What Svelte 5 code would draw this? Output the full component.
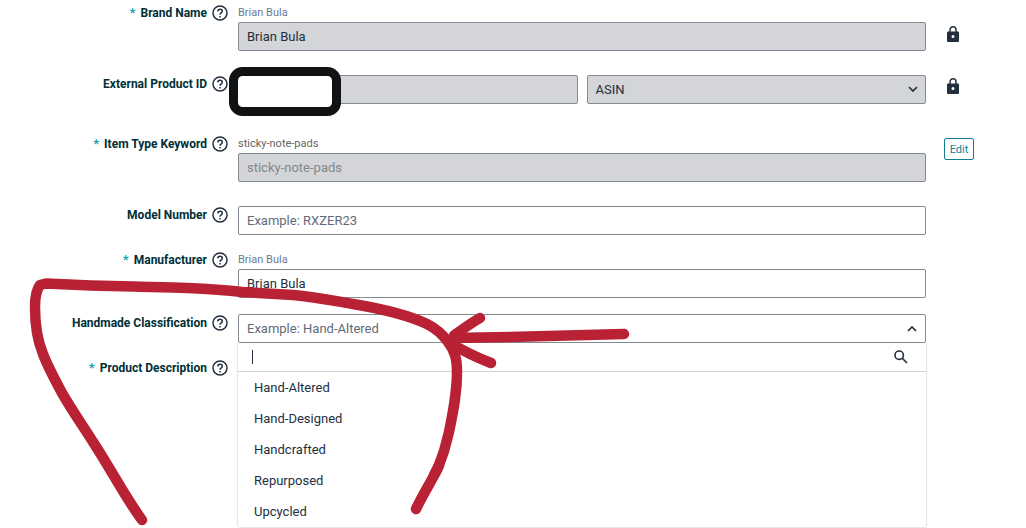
<script lang="ts">
    interface Field {
        id: string;
        label: string;
        required?: boolean;
        hint?: string;
        muted?: boolean;
        value?: string;
        placeholder?: string;
        disabled?: boolean;
        type: 'text' | 'external' | 'combo' | 'none';
        side?: 'lock' | 'edit';
        space?: 'md' | 'lg';
    }

    const fields: Field[] = [
        { id: 'brand', label: 'Brand Name', required: true, hint: 'Brian Bula', value: 'Brian Bula', disabled: true, type: 'text', side: 'lock', space: 'md' },
        { id: 'product-id', label: 'External Product ID', type: 'external', side: 'lock', space: 'lg' },
        { id: 'keyword', label: 'Item Type Keyword', required: true, hint: 'sticky-note-pads', muted: true, value: 'sticky-note-pads', disabled: true, type: 'text', side: 'edit', space: 'md' },
        { id: 'model', label: 'Model Number', placeholder: 'Example: RXZER23', type: 'text' },
        { id: 'manufacturer', label: 'Manufacturer', required: true, hint: 'Brian Bula', value: 'Brian Bula', type: 'text' },
        { id: 'classification', label: 'Handmade Classification', type: 'combo' },
        { id: 'description', label: 'Product Description', required: true, type: 'none' },
    ];

    const options = ['Hand-Altered', 'Hand-Designed', 'Handcrafted', 'Repurposed', 'Upcycled'];

    let open = $state(true);
    let search = $state('');
    let selected = $state('');

    let visible = $derived(options.filter(o => o.toLowerCase().includes(search.toLowerCase())));

    function choose(option: string) {
        selected = option;
        open = false;
    }
</script>

{#snippet chevron(up: boolean)}
    <svg class="chevron" viewBox="0 0 10 6" aria-hidden="true">
        <path d={up ? 'M1 5L5 1L9 5' : 'M1 1L5 5L9 1'} />
    </svg>
{/snippet}

<main>
    <form>
        {#each fields as field (field.id)}
            <div class="row {field.space ?? ''}">
                <div class="label">
                    {#if field.required}<span class="star">*</span>{/if}
                    {#if field.type === 'none'}
                        <span class="name">{field.label}</span>
                    {:else}
                        <label class="name" for={field.id}>{field.label}</label>
                    {/if}
                    <button type="button" class="help" aria-label="Help: {field.label}">
                        <svg viewBox="0 0 16 16" aria-hidden="true">
                            <circle cx="8" cy="8" r="7" />
                            <path d="M5.7 6.4C5.8 5 6.7 4.2 8 4.2C9.3 4.2 10.3 5 10.3 6.2C10.3 7.2 9.7 7.6 9 8.1C8.3 8.6 8 8.9 8 9.7" />
                            <path d="M8 11V12.4" />
                        </svg>
                    </button>
                </div>

                <div class="field">
                    {#if field.hint}
                        <div class="hint" class:plain={field.muted}>{field.hint}</div>
                    {/if}
                    {#if field.type === 'text'}
                        <input
                            class="box"
                            class:muted={field.muted}
                            id={field.id}
                            type="text"
                            value={field.value ?? ''}
                            placeholder={field.placeholder}
                            disabled={field.disabled}
                        />
                    {:else if field.type === 'external'}
                        <div class="pair">
                            <input class="box" id={field.id} type="text" disabled />
                            <div class="select">
                                <select class="box" aria-label="External Product ID Type" disabled>
                                    <option>ASIN</option>
                                </select>
                                {@render chevron(false)}
                            </div>
                        </div>
                    {:else if field.type === 'combo'}
                        <button
                            type="button"
                            class="box combo"
                            id={field.id}
                            aria-haspopup="listbox"
                            aria-expanded={open}
                            onclick={() => (open = !open)}
                        >
                            <span class:empty={!selected}>{selected || 'Example: Hand-Altered'}</span>
                            {@render chevron(open)}
                        </button>
                        {#if open}
                            <div class="menu">
                                <div class="search">
                                    <span class="caret"></span>
                                    <input type="text" aria-label="Search" bind:value={search} />
                                    <svg viewBox="0 0 14 14" aria-hidden="true">
                                        <circle cx="5.2" cy="5.2" r="4.2" />
                                        <path d="M8.4 8.4L13 13" />
                                    </svg>
                                </div>
                                <ul role="listbox" aria-label="Handmade Classification">
                                    {#each visible as option (option)}
                                        <li role="option" aria-selected={option === selected}>
                                            <button type="button" onclick={() => choose(option)}>{option}</button>
                                        </li>
                                    {/each}
                                </ul>
                            </div>
                        {/if}
                    {/if}
                </div>

                <div class="side" class:below={field.side === 'lock' && field.hint}>
                    {#if field.side === 'lock'}
                        <svg class="lock" viewBox="0 0 12 16" aria-hidden="true">
                            <path class="shackle" d="M3 6V4C3 2 4.2 0.8 6 0.8C7.8 0.8 9 2 9 4V6" />
                            <path class="body" fill-rule="evenodd" d="M1 5.5H11Q12 5.5 12 6.5V15Q12 16 11 16H1Q0 16 0 15V6.5Q0 5.5 1 5.5ZM6 9A1.5 1.5 0 1 0 6 12A1.5 1.5 0 1 0 6 9Z" />
                        </svg>
                    {:else if field.side === 'edit'}
                        <button type="button" class="edit">Edit</button>
                    {/if}
                </div>
            </div>
        {/each}
    </form>

    <!-- hand-drawn marks over the form -->
    <svg class="marks" width="1026" height="528" viewBox="0 0 1026 528" aria-hidden="true">
        <rect x="233.5" y="71.5" width="103" height="40" rx="9" />
        <path d="M142 520C125 497 109 466 93 442C83 426 73 412 62 393C55 380 48 367 43 354C36 337 35 321 35 307C35 297 37 289 40 285L46 283.5C76 285 104 286 133 286.5C152 287 170 287 187 288C208 289 224 290 242 292C261 293 277 294 293 295C315 297 335 301 353 304C383 309 408 315 427 324C437 329 443 335 448 342C455 351 457 359 457 372C457 394 453 412 449 432C446 446 442 458 438 468C431 482 423 494 416 509" />
        <path d="M439 465L434 475" />
        <path d="M624 334L510 337L453 338" />
        <path d="M480 318C471 323 463 329 454 335.5" />
        <path d="M491 363C478 358 465 352 450 343" />
    </svg>
</main>

<style>
    :global(body) {
        margin: 0;
        background: #fff;
    }
    main {
        position: relative;
        min-height: 100vh;
        overflow: hidden;
        font-family: Roboto, "Noto Sans", sans-serif;
        font-size: 13px;
        color: #232f3e;
    }
    form {
        display: flex;
        flex-direction: column;
        gap: 16px;
        padding-top: 4px;
    }
    .row {
        display: grid;
        grid-template-columns: 228px 1fr 100px;
    }
    .row.md {
        margin-bottom: 8px;
    }
    .row.lg {
        margin-bottom: 15px;
    }
    button,
    input,
    select {
        font: inherit;
        color: inherit;
        box-sizing: border-box;
    }
    svg {
        fill: none;
        stroke: #232f3e;
    }
    .label {
        display: flex;
        justify-content: flex-end;
        align-items: center;
        height: 18px;
    }
    .name {
        font-size: 12px;
        font-weight: 700;
        color: #002f36;
        line-height: 18px;
        white-space: nowrap;
    }
    .star {
        margin-right: 5px;
        font-weight: 700;
        line-height: 18px;
        color: #1a9fb3;
    }
    .help {
        width: 16px;
        height: 16px;
        margin-left: 5px;
        padding: 0;
        border: 0;
        background: none;
    }
    .help svg {
        display: block;
        stroke-width: 1.5;
    }
    .field {
        position: relative;
        min-width: 0;
        margin-left: 10px;
    }
    .hint {
        font-size: 11px;
        line-height: 18px;
        color: #6b7a93;
    }
    .hint.plain {
        color: #666;
    }
    .box {
        display: block;
        width: 100%;
        height: 29px;
        padding: 0 8px;
        border: 1px solid #848a94;
        border-radius: 2px;
        background: #fff;
        appearance: none;
    }
    .box:disabled {
        background: #d4d5d9;
        color: #232f3e;
        opacity: 1;
    }
    .box.muted:disabled {
        color: #82878e;
    }
    .box::placeholder,
    .empty {
        color: #5f6b7a;
    }
    .pair {
        display: grid;
        grid-template-columns: 1fr 1fr;
        gap: 9px;
    }
    .select {
        position: relative;
    }
    .chevron {
        width: 10px;
        height: 6px;
        stroke-width: 1.7;
    }
    .select .chevron {
        position: absolute;
        right: 8px;
        top: 11px;
    }
    .combo {
        display: flex;
        align-items: center;
        justify-content: space-between;
    }
    .menu {
        position: absolute;
        z-index: 1;
        top: 29px;
        left: 0;
        right: 0;
        background: #fff;
        box-shadow: 0 0 2px rgba(0, 0, 0, 0.3);
        clip-path: inset(0 -3px -3px -3px);
    }
    .search {
        display: flex;
        align-items: center;
        height: 28px;
        padding: 0 18px 0 14px;
        border-bottom: 1px solid #d0d1d3;
    }
    .caret {
        width: 1px;
        height: 14px;
        background: #232f3e;
    }
    .search input {
        flex: 1;
        min-width: 0;
        padding: 0;
        border: 0;
        outline: 0;
        background: none;
    }
    .search svg {
        width: 14px;
        height: 14px;
        stroke-width: 1.6;
    }
    ul {
        margin: 0;
        padding: 0;
        list-style: none;
    }
    li button {
        display: block;
        width: 100%;
        height: 31px;
        padding: 0 16px;
        border: 0;
        background: none;
        text-align: left;
    }
    .side {
        padding: 3px 0 0 18px;
    }
    .side.below {
        padding-top: 22px;
    }
    .lock {
        display: block;
        width: 12px;
        height: 16px;
        margin-left: 3px;
    }
    .lock .shackle {
        stroke-width: 1.5;
    }
    .lock .body {
        fill: #232f3e;
        stroke: none;
    }
    .edit {
        width: 30px;
        height: 22px;
        padding: 0;
        border: 1px solid #107f94;
        border-radius: 2px;
        background: #fff;
        font-size: 11px;
        color: #107f94;
    }
    .marks {
        position: absolute;
        z-index: 2;
        top: 0;
        left: 0;
        pointer-events: none;
    }
    .marks rect {
        fill: #fff;
        stroke: #111214;
        stroke-width: 9;
    }
    .marks path {
        stroke: #b92234;
        stroke-width: 10.5;
        stroke-linecap: round;
        stroke-linejoin: round;
    }
</style>
